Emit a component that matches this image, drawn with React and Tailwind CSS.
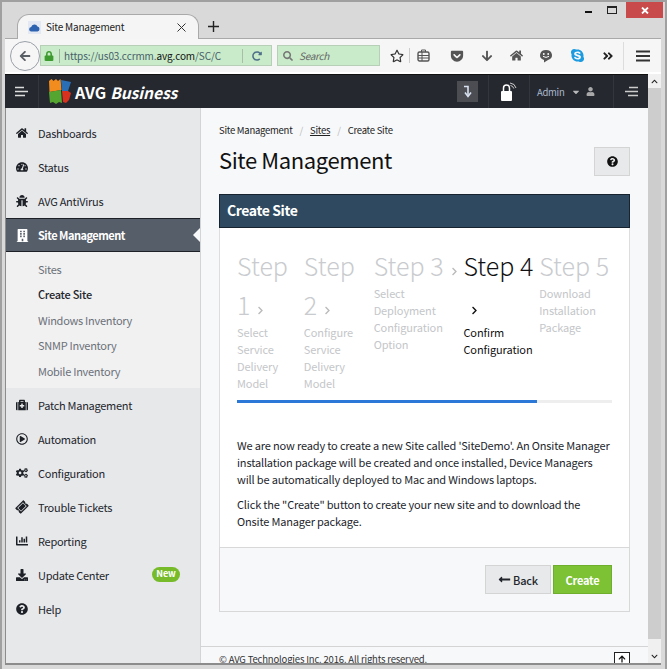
import {
  FaHome, FaTachometerAlt, FaBug, FaBuilding, FaMedkit, FaRegPlayCircle, FaCogs, FaTicketAlt,
  FaChartBar, FaDownload, FaQuestionCircle, FaChevronRight, FaLongArrowAltLeft, FaArrowUp, FaUser,
  FaRegStar, FaArrowDown, FaSearch, FaLock, FaCaretDown, FaArrowLeft, FaSkype, FaRedoAlt, FaAngleDoubleRight,
  FaGetPocket, FaChevronUp, FaChevronDown,
} from "react-icons/fa"

const topNav = [
  { label: "Dashboards", icon: FaHome },
  { label: "Status", icon: FaTachometerAlt },
  { label: "AVG AntiVirus", icon: FaBug },
]

const subNav = ["Sites", "Create Site", "Windows Inventory", "SNMP Inventory", "Mobile Inventory"]

const bottomNav = [
  { label: "Patch Management", icon: FaMedkit },
  { label: "Automation", icon: FaRegPlayCircle },
  { label: "Configuration", icon: FaCogs },
  { label: "Trouble Tickets", icon: FaTicketAlt, tilt: true },
  { label: "Reporting", icon: FaChartBar },
  { label: "Update Center", icon: FaDownload, badge: "New" },
  { label: "Help", icon: FaQuestionCircle },
]

const steps = [
  { num: 1, width: "w-[67px] pr-[6px]", desc: ["Select", "Service", "Delivery", "Model"] },
  { num: 2, width: "w-[70px] pr-[8px]", desc: ["Configure", "Service", "Delivery", "Model"] },
  { num: 3, width: "w-[90px]", desc: ["Select", "Deployment", "Configuration", "Option"] },
  { num: 4, width: "w-[76px]", desc: ["Confirm", "Configuration"], active: true },
  { num: 5, width: "w-[73px]", desc: ["Download", "Installation", "Package"], last: true },
]

const NavItem = ({ item }) => {
  const Icon = item.icon
  return (
    <div className="relative flex items-center h-[34px] leading-[18px] text-[#23262c]">
      <span className="w-[32px] flex justify-center"><Icon className={item.tilt ? "text-[12px] text-[#1d2026] -rotate-45" : "text-[12px] text-[#1d2026]"} /></span>
      <span>{item.label}</span>
      {item.badge && (
        <span className="absolute left-[146px] top-[9px] h-[15px] w-[28px] rounded-full bg-[#77bb2b] text-white text-[9px] tracking-normal font-bold leading-[14px] text-center">{item.badge}</span>
      )}
    </div>
  )
}

const AvgLogo = () => (
  <svg width="24" height="25" viewBox="0 0 24 25">
    <path d="M1 2l2.5-2 2 2 2.5-2 2 2 2.5-2 1 11-12 2z" fill="#f28c1e" />
    <path d="M13 1l10 2-3 9-6 0z" fill="#2a6fb5" />
    <path d="M1 13l12-2 1 13-3-1-3 2-3-2-3 1z" fill="#55a630" />
    <path d="M14 12l6 0 3 2-2 7-3 3-3-1z" fill="#d8321f" />
  </svg>
)

const MenuLines = ({ className }) => (
  <svg width="15" height="11" viewBox="0 0 15 11" className={className}>
    <path d="M1 1.5h9M1 5.5h13M1 9.5h10" stroke="currentColor" strokeWidth="1.4" fill="none" />
  </svg>
)

const BrowserChrome = () => (
  <div className="flex h-[36px] shrink-0">
    <div className="ml-[15px] mt-[12px] w-[182px] h-[25px] bg-[#f5f5f5] rounded-t-[12px] border border-b-0 border-[#a9a9a9] flex items-center pl-[10px] pr-[10px] text-[10px] tracking-[-0.2px] leading-[16px] text-[#222] z-20">
      <span className="w-[13px] h-[13px] bg-[#e3e8f2] flex items-center justify-center mr-[5px]">
        <svg width="11" height="9" viewBox="0 0 11 9"><path d="M2.5 8.5a2.2 2.2 0 0 1-.3-4.4 3.3 3.3 0 0 1 6.3-.5 2.5 2.5 0 0 1 0 4.9z" fill="#2d62b0" /></svg>
      </span>
      <span>Site Management</span>
      <svg width="9" height="9" viewBox="0 0 9 9" className="ml-auto mr-[2px]"><path d="M.5.5l8 8M8.5.5l-8 8" stroke="#333" strokeWidth="1" /></svg>
    </div>
    <svg width="11" height="11" viewBox="0 0 11 11" className="ml-[9px] mt-[19px]"><path d="M5.5 0v11M0 5.5h11" stroke="#222" strokeWidth="1.4" /></svg>
    <div className="ml-auto flex items-start">
      <span className="mt-[9px] mr-[15px] w-[7px] h-[2px] bg-[#111]"></span>
      <span className="mt-[4px] mr-[9px] w-[10px] h-[8px] border border-[#222] border-t-2"></span>
      <span className="w-[37px] h-[16px] mr-[2px] bg-[#c94a4a] flex items-center justify-center">
        <svg width="8" height="7" viewBox="0 0 8 7"><path d="M1 .5l6 6M7 .5l-6 6" stroke="#fff" strokeWidth="1.8" /></svg>
      </span>
    </div>
  </div>
)

const Toolbar = () => (
  <div className="h-[34px] shrink-0 bg-[#f6f6f6] border-t border-[#a9a9a9] flex items-center relative pl-[35px]">
    <span className="absolute left-[5px] top-[2px] w-[30px] h-[30px] rounded-full bg-[#f6f6f6] border border-[#9aa0a8] flex items-center justify-center z-10">
      <FaArrowLeft className="text-[12px] text-[#5b5f66]" />
    </span>
    <div className="w-[232px] h-[21px] bg-[#c9ebc9] border border-[#b7cfb7] flex items-center text-[10px] tracking-[-0.1px] leading-[16px] text-[#47606a] pl-[3px]">
      <FaLock className="text-[10px] text-[#3c9a2e] mr-[5px] shrink-0" />
      <span className="w-px h-[14px] bg-[#9bb59b] mr-[4px] shrink-0"></span>
      <span>https://us03.ccrmm.<span className="text-[#111]">avg.com</span>/SC/C</span>
      <span className="ml-auto w-px h-[14px] bg-[#a6bfa6]"></span>
      <FaRedoAlt className="text-[10px] text-[#50708a] mx-[9px]" />
    </div>
    <div className="ml-[5px] w-[103px] h-[21px] bg-[#c9ebc9] border border-[#b7cfb7] flex items-center text-[10px] tracking-[-0.3px] leading-[16px] italic text-[#666] pl-[5px]">
      <FaSearch className="text-[10px] text-[#777] mr-[6px]" />
      <span>Search</span>
    </div>
    <FaRegStar className="ml-[10px] text-[14px] text-[#333]" />
    <span className="ml-[5px] w-px h-[15px] bg-[#ccc]"></span>
    <svg width="13" height="13" viewBox="0 0 13 13" className="ml-[7px]"><rect x="1" y="3" width="11" height="9" rx="1.5" fill="none" stroke="#555" strokeWidth="1.4" /><path d="M4.5 3V1h4v2M1 6.5h11M1 9h11M5 3v9" stroke="#555" strokeWidth="1" fill="none" /></svg>
    <FaGetPocket className="ml-[20px] text-[14px] text-[#555]" />
    <FaArrowDown className="ml-[17px] text-[12px] text-[#555]" />
    <FaHome className="ml-[17px] text-[13px] text-[#555]" />
    <svg width="14" height="14" viewBox="0 0 14 14" className="ml-[16px]"><path d="M7 1a6 5.2 0 0 1 2 10.1L5 13.5v-2.4A6 5.2 0 0 1 7 1z" fill="#555" /><circle cx="4.8" cy="5" r=".9" fill="#fff" /><circle cx="9.2" cy="5" r=".9" fill="#fff" /><path d="M4 7.4q3 2 6 0" stroke="#fff" strokeWidth="1" fill="none" /></svg>
    <FaSkype className="ml-[17px] text-[15px] text-[#1c9be0]" />
    <FaAngleDoubleRight className="ml-[17px] text-[12px] text-[#222]" />
    <span className="ml-[9px] w-px h-[28px] bg-[#ddd]"></span>
    <svg width="14" height="12" viewBox="0 0 14 12" className="ml-[12px]"><path d="M0 1.5h14M0 6h14M0 10.5h14" stroke="#333" strokeWidth="2" /></svg>
  </div>
)

const Header = () => (
  <div className="h-[34px] shrink-0 bg-[#25282f] flex items-center text-white border-t border-[#111]">
    <div className="w-[34px] h-full border-r border-[#33363d] flex items-center justify-center text-[#ddd]">
      <MenuLines />
    </div>
    <div className="ml-[9px] flex items-center">
      <AvgLogo />
      <span className="ml-[3px] text-[16px] leading-[24px] font-bold">AVG</span>
      <span className="ml-[4px] text-[15.5px] leading-[24px] italic font-semibold">Business</span>
    </div>
    <div className="ml-auto flex h-full items-center">
      <div className="w-[21px] h-[21px] bg-[#4b4d53] flex items-center justify-center mr-[10px]">
        <svg width="9" height="13" viewBox="0 0 9 13"><path d="M1 1.5h4v8M2 7.5l3 4 3-4" stroke="#d9e2f0" strokeWidth="1.6" fill="none" /></svg>
      </div>
      <div className="w-[42px] h-full border-l border-r border-[#33363d] flex items-center justify-center">
        <svg width="18" height="20" viewBox="0 0 18 20">
          <rect x="1" y="9" width="11" height="10" rx="1" fill="#fff" />
          <path d="M3.5 9V6a3 3 0 0 1 6 0v3" stroke="#fff" strokeWidth="1.5" fill="none" />
          <path d="M10 1q5 .5 6 5M10.5 3.5q2.5.3 3.3 3" stroke="#ccc" strokeWidth="1" fill="none" />
        </svg>
      </div>
      <div className="w-[84px] h-full pl-[7px] flex items-center border-r border-[#33363d] text-[9.5px] tracking-[-0.3px] leading-[14px] text-[#a9b8cc]">
        <span>Admin</span>
        <FaCaretDown className="ml-[7px] text-[10px] text-[#b9b9b9]" />
        <FaUser className="ml-[5px] text-[9px] text-[#a9a9a9]" />
      </div>
      <div className="w-[34px] flex justify-center text-[#ccc]"><MenuLines className="-scale-x-100" /></div>
    </div>
  </div>
)

const Sidebar = () => (
  <aside className="w-[195px] shrink-0 bg-[#e7e8ea] border-r border-[#d2d4d7] text-[11px] tracking-[-0.27px] pt-[8px]">
    {topNav.map((item) => <NavItem key={item.label} item={item} />)}
    <div className="relative flex items-center h-[34px] leading-[18px] bg-[#565e6a] border-y border-[#1d2026] text-white font-bold tracking-[-0.5px]">
      <span className="w-[32px] flex justify-center"><FaBuilding className="text-[13px] text-white" /></span>
      <span>Site Management</span>
      <span className="absolute right-0 top-[9px] w-0 h-0 border-y-[7px] border-y-transparent border-r-[7px] border-r-[#f7f8fa]"></span>
    </div>
    <div className="bg-[#f1f1f2] pt-[4px] pb-[4px] pl-[32px] text-[#6b7078] leading-[18px]">
      {subNav.map((s) => (
        <div key={s} className={s === "Create Site" ? "h-[25.5px] flex items-center text-[#23262c] font-medium" : "h-[25.5px] flex items-center"}>{s}</div>
      ))}
    </div>
    {bottomNav.map((item) => <NavItem key={item.label} item={item} />)}
  </aside>
)

const Steps = () => (
  <div className="flex items-start">
    {steps.map((s) => (
      <div key={s.num} className={s.width}>
        <h3 className={s.active ? "text-[25px] leading-[39px] font-extralight text-[#111]" : "text-[25px] leading-[39px] font-extralight text-[#c9cbce]"}>
          Step {s.num}
          {!s.last && <FaChevronRight className={s.active ? "inline ml-[7px] text-[9px] text-[#111] align-baseline" : "inline ml-[6px] text-[9px] text-[#bbb] align-baseline"} />}
        </h3>
        <div className={s.active ? "text-[11px] tracking-[-0.1px] leading-[17px] text-[#111]" : "text-[11px] tracking-[-0.1px] leading-[17px] text-[#c4c6c9]"}>
          {s.desc.map((d) => <div key={d}>{d}</div>)}
        </div>
      </div>
    ))}
  </div>
)

const Main = () => (
  <main className="flex-1 bg-[#f7f8fa] flex flex-col min-w-0 overflow-hidden">
    <div className="flex-1 pl-[18px] pr-[18px] pt-[15px]">
      <div className="flex items-center text-[9.5px] tracking-[-0.25px] leading-[14px] text-[#222]">
        <span>Site Management</span>
        <span className="mx-[7px] text-[#bbb]">/</span>
        <span className="underline">Sites</span>
        <span className="mx-[7px] text-[#bbb]">/</span>
        <span>Create Site</span>
      </div>
      <div className="flex items-start justify-between mt-[7px]">
        <h1 className="text-[22px] tracking-[-0.4px] leading-[30px] text-[#111]">Site Management</h1>
        <button className="mt-[3px] w-[36px] h-[29px] bg-[#e8e9ea] border border-[#d4d4d4] flex items-center justify-center">
          <FaQuestionCircle className="text-[11px] text-[#111]" />
        </button>
      </div>
      <div className="mt-[18px]">
        <div className="h-[34px] pb-[2px] bg-[#2f4a60] border border-[#17232e] text-white text-[14px] tracking-[-0.4px] leading-[20px] font-semibold flex items-center pl-[7px]">Create Site</div>
        <div className="bg-white border-x border-[#ddd] px-[17px] pt-[18px] h-[319px]">
          <Steps />
          <div className="mt-[8px] h-[3px] bg-[#eeeeee]">
            <div className="h-full w-[80%] bg-[#2b78d8]"></div>
          </div>
          <div className="mt-[34px] text-[11px] tracking-[-0.16px] leading-[17px] text-[#23262c]">
            <p>We are now ready to create a new Site called 'SiteDemo'. An Onsite Manager installation package will be created and once installed, Device Managers will be automatically deployed to Mac and Windows laptops.</p>
            <p className="mt-[8px]">Click the "Create" button to create your new site and to download the Onsite Manager package.</p>
          </div>
        </div>
        <div className="h-[65px] bg-[#f7f8fa] border border-[#d8d8d8] flex items-start justify-end pt-[17px] pr-[17px] gap-[2px]">
          <button className="w-[66px] h-[29px] bg-[#e8e9ea] border border-[#d4d4d4] text-[11px] tracking-[-0.2px] leading-[16px] font-medium text-[#23262c] flex items-center justify-center">
            <FaLongArrowAltLeft className="text-[13px] mr-[2px]" />Back
          </button>
          <button className="w-[59px] h-[29px] bg-[#7cc234] border border-[#6fae2d] text-[11px] tracking-[-0.2px] leading-[16px] font-bold text-white">Create</button>
        </div>
      </div>
    </div>
    <div className="h-[17px] shrink-0 border-t border-[#d4d4d4] pl-[18px] pr-[18px] flex items-start justify-between text-[9.5px] tracking-[-0.17px] leading-[14px] text-[#333] overflow-hidden">
      <span className="mt-[5px]">© AVG Technologies Inc. 2016. All rights reserved.</span>
      <span className="mt-[5px] w-[16px] h-[20px] bg-white border border-[#222] flex justify-center pt-[2px]"><FaArrowUp className="text-[8px] text-[#111]" /></span>
    </div>
  </main>
)

const Scrollbar = () => (
  <div className="w-[13px] shrink-0 bg-[#f0f0f0] flex flex-col">
    <div className="h-[14px] flex items-center justify-center"><FaChevronUp className="text-[7px] text-[#222]" /></div>
    <div className="flex-1 bg-[#cdcdcd]"></div>
    <div className="h-[10px]"></div>
    <div className="h-[14px] flex items-center justify-center"><FaChevronDown className="text-[7px] text-[#222]" /></div>
  </div>
)

const App = () => {
  return (
    <div className="w-[667px] h-[669px] overflow-hidden bg-[#d9d9d9] border-x-[2px] border-t-[2px] border-[#a0a0a0] flex flex-col" style={{ fontFamily: '"Noto Sans CJK SC", "Lato", sans-serif' }}>
      <BrowserChrome />
      <div className="flex flex-col mb-[4px] ml-[3px] mr-[4px] border-b-[2px] border-[#8c8c8c] overflow-hidden bg-white min-h-0 flex-1">
        <Toolbar />
        <div className="h-[2px] shrink-0 bg-white"></div>
        <div className="flex flex-1 min-h-0">
          <div className="flex flex-col flex-1 min-w-0">
            <Header />
            <div className="flex flex-1 min-h-0 border-l border-[#8c8c8c]">
              <Sidebar />
              <Main />
            </div>
          </div>
          <Scrollbar />
        </div>
      </div>
    </div>
  )
}

export default App
